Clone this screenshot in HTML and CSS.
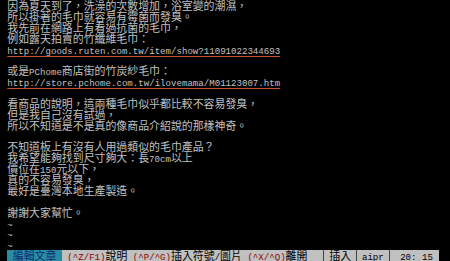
FILE: index.html
```html
<!DOCTYPE html>
<html lang="zh-Hant">
<head>
<meta charset="utf-8">
<title>編輯文章</title>
<link rel="stylesheet" href="styles.css">
</head>
<body>
<div class="term">
  <div class="row">因為夏天到了，洗澡的次數增加，浴室變的潮濕，</div>
  <div class="row">所以掛著的毛巾就容易有霉菌而發臭。</div>
  <div class="row">我先前在網路上有看過抗菌的毛巾，</div>
  <div class="row">例如露天拍賣的竹纖維毛巾：</div>
  <div class="row"><span class="a url">http://goods.ruten.com.tw/item/show?11091022344693</span></div>
  <div class="row"></div>
  <div class="row">或是<span class="a">PChome</span>商店街的竹炭紗毛巾：</div>
  <div class="row"><span class="a url">http://store.pchome.com.tw/ilovemama/M01123007.htm</span></div>
  <div class="row"></div>
  <div class="row">看商品的說明，這兩種毛巾似乎都比較不容易發臭，</div>
  <div class="row">但是我自己沒有試過，</div>
  <div class="row">所以不知道是不是真的像商品介紹說的那樣神奇。</div>
  <div class="row"></div>
  <div class="row">不知道板上有沒有人用過類似的毛巾產品？</div>
  <div class="row">我希望能夠找到尺寸夠大：長<span class="a">70cm</span>以上</div>
  <div class="row">價位在<span class="a">150</span>元以下，</div>
  <div class="row">真的不容易發臭，</div>
  <div class="row">最好是臺灣本地生產製造。</div>
  <div class="row"></div>
  <div class="row">謝謝大家幫忙。</div>
  <div class="row"><span class="a">~</span></div>
  <div class="row"><span class="a">~</span></div>
  <div class="row"><span class="a">~</span></div>
  <div class="row status">
    <span class="label"><span class="a"> </span>編輯文章<span class="a"> </span></span><span class="bar"><span class="a"> </span><span class="a key">(^Z/F1)</span>說明<span class="a"> </span><span class="a key">(^P/^G)</span>插入符號<span class="a">/</span>圖片<span class="a"> </span><span class="a key">(^X/^Q)</span>離開<span class="a">  </span><span class="sep"></span>插入<span class="sep"></span><span class="a">aipr</span><span class="sep"></span><span class="a"> 20: 15 </span></span>
  </div>
</div>
</body>
</html>
```
FILE: styles.css
```css
html, body {
  margin: 0;
  padding: 0;
  background: #000;
}
body {
  width: 450px;
  height: 261px;
  overflow: hidden;
}
.term {
  padding-left: 7.3px;
  color: #c0c0c0;
  font-family: "Noto Sans CJK TC", "Noto Sans CJK SC", sans-serif;
  font-size: 10.92px;
}
.row {
  height: 10.875px;
  line-height: 10.875px;
  white-space: pre;
  overflow: visible;
}
.a {
  font-family: "Liberation Mono", monospace;
  font-size: 9.1px;
}
.url {
  text-decoration: underline;
  text-decoration-color: #c8502a;
  text-decoration-thickness: 1px;
  text-underline-offset: 2px;
}
.status {
  display: flex;
}
.label {
  display: block;
  background: #2a8ca3;
  color: #0c2f72;
}
.bar {
  display: block;
  width: 376.74px;
  background: #c0c0c0;
  color: #000;
}
.key {
  color: #900000;
}
.sep {
  display: inline-block;
  width: 10.92px;
  height: 10.875px;
  vertical-align: top;
  background: linear-gradient(#404040, #404040) center / 1px 100% no-repeat;
}
```
